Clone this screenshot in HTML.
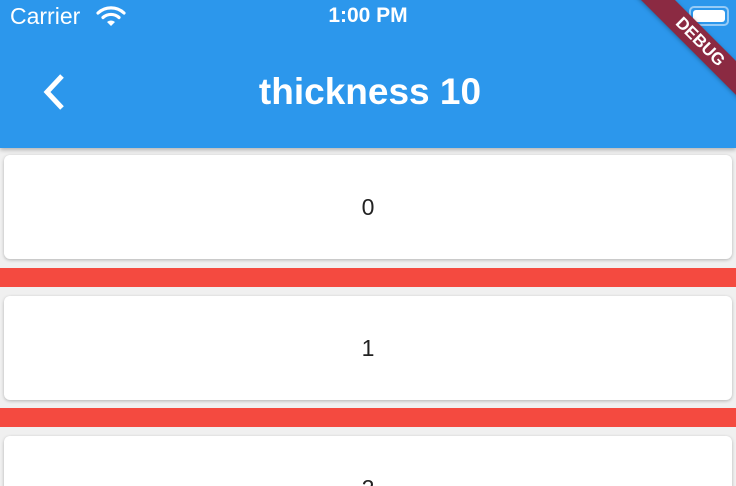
<html><head><style>
html,body{margin:0;width:736px;height:486px;overflow:hidden}
body{background:#f0f0f0;font-family:"Liberation Sans",sans-serif;position:relative}
.bar{position:absolute;left:0;top:0;width:736px;height:148px;background:#2c97ec;box-shadow:0 2px 4px rgba(0,0,0,.25)}
.card{position:absolute;left:4px;width:728px;height:104px;background:#fff;border-radius:6px;box-shadow:0 1px 3px rgba(0,0,0,.25);text-align:center;line-height:104px;font-size:23px;color:#222}
.red{position:absolute;left:0;width:736px;height:19px;background:#f44a40}
</style></head><body>
<div class="bar">
<div style="position:absolute;left:10px;top:3px;color:#fff;font-size:23px">Carrier</div>
<svg style="position:absolute;left:96px;top:6px" width="30" height="20" viewBox="0 0 30 20"><path d="M2 7 A19 19 0 0 1 28 7" stroke="#fff" stroke-width="3.2" fill="none" stroke-linecap="round"/><path d="M7 11.5 A12 12 0 0 1 23 11.5" stroke="#fff" stroke-width="3.2" fill="none" stroke-linecap="round"/><path d="M11 16 L15 20 L19 16 A6 6 0 0 0 11 16Z" fill="#fff"/></svg>
<div style="position:absolute;left:0;width:736px;top:4px;text-align:center;color:#fff;font-size:21px;font-weight:bold">1:00 PM</div>
<div style="position:absolute;left:689px;top:6px;width:36px;height:16px;border:2px solid rgba(255,255,255,.5);border-radius:5px"><div style="margin:2px;height:12px;background:#fff;border-radius:3px"></div></div>
<svg style="position:absolute;left:40px;top:73px" width="28" height="40"><path d="M22 3 L7 19 L22 35" stroke="#fff" stroke-width="5" fill="none"/></svg>
<div style="position:absolute;left:0;width:740px;top:71px;text-align:center;color:#fff;font-size:37px;font-weight:bold">thickness 10</div>
</div>
<div style="position:absolute;left:620px;top:30px;width:160px;height:24px;background:#8b2a42;transform:rotate(45deg);color:#fff;font-weight:bold;font-size:17px;text-align:center;line-height:24px;box-shadow:0 1px 4px rgba(0,0,0,.3)">DEBUG</div>
<div class="card" style="top:155px">0</div>
<div class="red" style="top:268px"></div>
<div class="card" style="top:296px">1</div>
<div class="red" style="top:408px"></div>
<div class="card" style="top:436px">2</div>
</body></html>
